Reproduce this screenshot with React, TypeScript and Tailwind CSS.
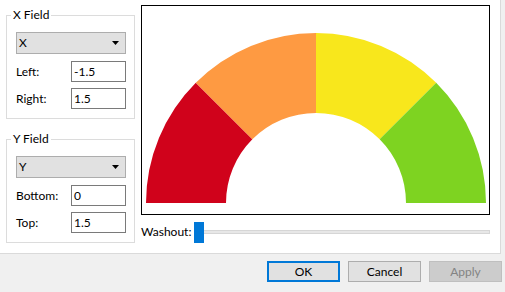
import React from "react";

function Combo({ value }: { value: string }) {
  return (
    <div className="flex items-center justify-between w-[110px] h-[22px] bg-[#e1e1e1] border border-[#adadad] pl-[2px] pr-[6px]">
      <span>{value}</span>
      <svg width="7" height="4" viewBox="0 0 7 4">
        <polygon points="0,0 7,0 3.5,4" fill="#000" />
      </svg>
    </div>
  );
}

function Field({ label, value, mt }: { label: string; value: string; mt: string }) {
  return (
    <div className={`flex items-center ${mt}`}>
      <span className="w-[55px]">{label}</span>
      <div className="w-[55px] h-[21px] border border-[#7a7a7a] bg-white flex items-center pl-[2px]">{value}</div>
    </div>
  );
}

function Group({
  title,
  combo,
  rows,
  mt,
}: {
  title: string;
  combo: string;
  rows: [string, string][];
  mt: string;
}) {
  return (
    <fieldset className={`w-[129px] border border-[#dcdcdc] pb-[9px] ${mt}`}>
      <legend className="ml-[4px] px-[2px] leading-[16px]">{title}</legend>
      <div className="pl-[9px]">
        <div className="mt-[9px]">
          <Combo value={combo} />
        </div>
        <Field label={rows[0][0]} value={rows[0][1]} mt="mt-[7px]" />
        <Field label={rows[1][0]} value={rows[1][1]} mt="mt-[6px]" />
      </div>
    </fieldset>
  );
}

function Gauge() {
  const cx = 174;
  const cy = 197;
  const R = 170;
  const r = 90;
  const seg = (a0: number, a1: number) => {
    const p = (ang: number, rad: number) => {
      const t = (ang * Math.PI) / 180;
      return [cx - rad * Math.cos(t), cy - rad * Math.sin(t)];
    };
    const [x0, y0] = p(a0, R);
    const [x1, y1] = p(a1, R);
    const [x2, y2] = p(a1, r);
    const [x3, y3] = p(a0, r);
    return `M${x0},${y0} A${R},${R} 0 0 1 ${x1},${y1} L${x2},${y2} A${r},${r} 0 0 0 ${x3},${y3} Z`;
  };
  return (
    <svg width="347" height="208" viewBox="0 0 347 208" className="block">
      <path d={seg(0, 45)} fill="#d0021b" />
      <path d={seg(45, 90)} fill="#fe9a42" />
      <path d={seg(90, 135)} fill="#f8e71c" />
      <path d={seg(135, 180)} fill="#7ed321" />
    </svg>
  );
}

export default function App() {
  return (
    <div className="w-[505px] h-[292px] bg-[#f0f0f0] text-[12px] text-black font-['Segoe_UI','Lato',sans-serif] leading-[16px]">
      <div className="w-[501px] h-[254px] bg-white border-r border-b border-[#dadada] flex">
        <div className="pl-[6px] w-[141px]">
          <Group title="X Field" combo="X" rows={[["Left:", "-1.5"], ["Right:", "1.5"]]} mt="mt-[7px]" />
          <Group title="Y Field" combo="Y" rows={[["Bottom:", "0"], ["Top:", "1.5"]]} mt="mt-[12px]" />
        </div>
        <div className="pt-[5px] flex flex-col">
          <div className="w-[349px] h-[210px] border border-black">
            <Gauge />
          </div>
          <div className="flex items-center mt-[6px] h-[22px]">
            <span className="w-[53px]">Washout:</span>
            <div className="relative flex-1 flex items-center h-[21px]">
              <div className="w-full h-[4px] bg-[#e7e7e7] border border-[#d6d6d6]" />
              <div className="absolute left-0 top-0 w-[10px] h-[21px] bg-[#0078d7]" />
            </div>
          </div>
        </div>
      </div>
      <div className="flex justify-end gap-[8px] pr-[3px] pt-[7px]">
        <button className="w-[73px] h-[21px] bg-[#e1e1e1] border-2 border-[#0078d7] flex items-center justify-center">OK</button>
        <button className="w-[73px] h-[21px] bg-[#e1e1e1] border border-[#adadad] flex items-center justify-center">Cancel</button>
        <button className="w-[73px] h-[21px] bg-[#cccccc] border border-[#bfbfbf] text-[#838383] flex items-center justify-center">Apply</button>
      </div>
    </div>
  );
}
